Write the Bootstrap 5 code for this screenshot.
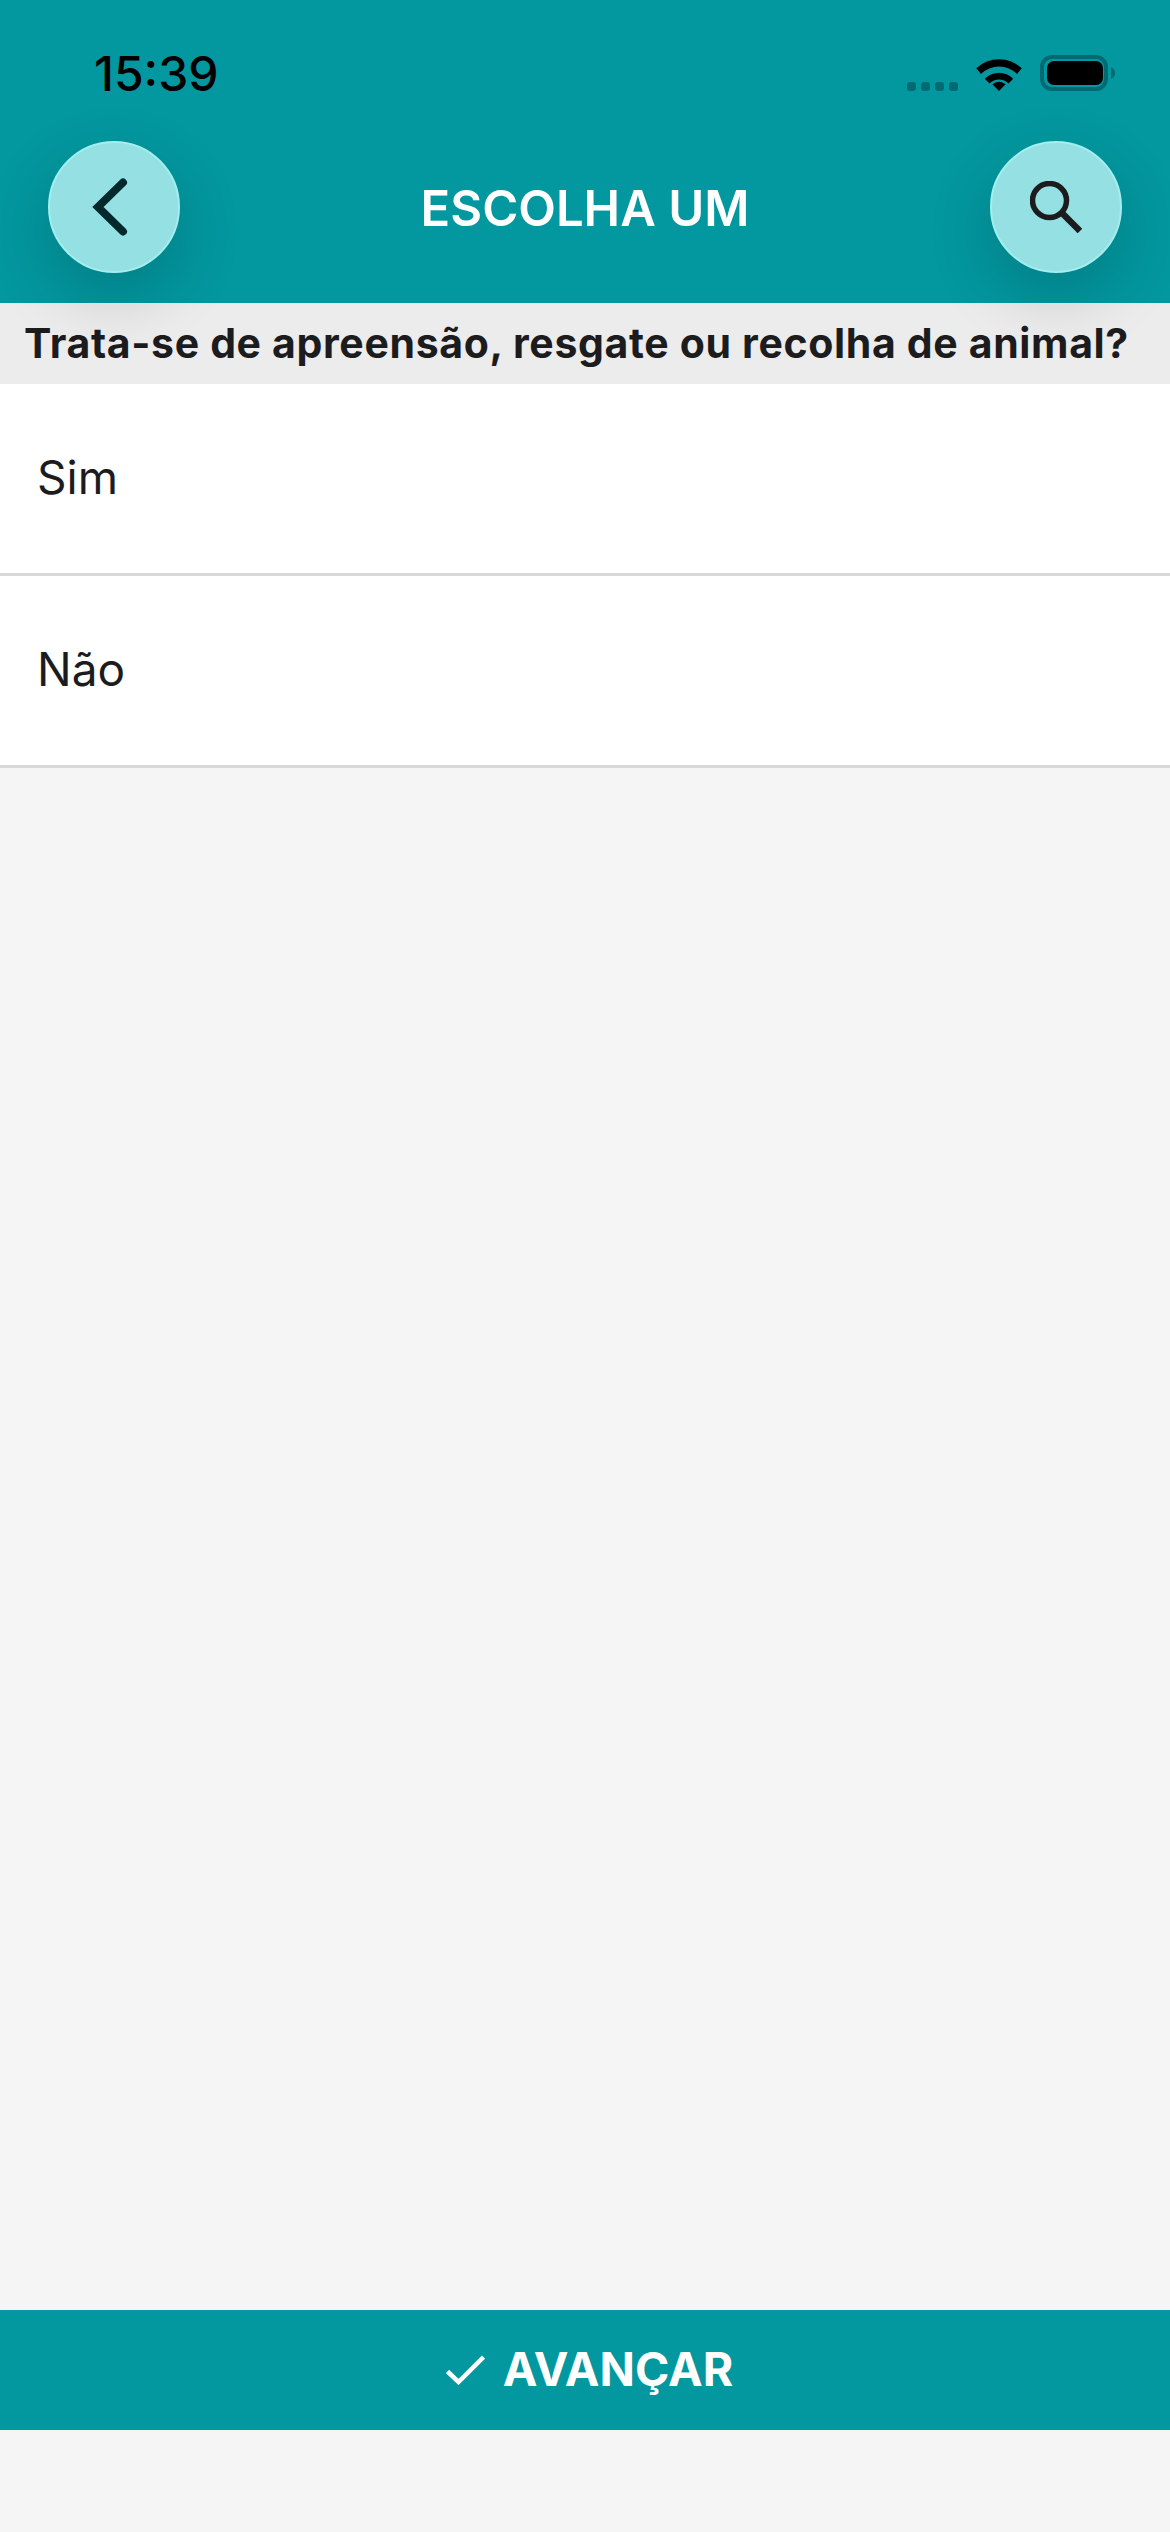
<!DOCTYPE html>
<html lang="pt">
<head>
    <meta charset="UTF-8">
    <meta name="viewport" content="width=device-width, initial-scale=1.0">
    <title>Escolha um</title>
    <link href="https://cdn.jsdelivr.net/npm/bootstrap@5.3.0/dist/css/bootstrap.min.css" rel="stylesheet">
    <style>
        html, body { margin: 0; }
        body { background: #f5f5f5; font-family: Inter, "Liberation Sans", sans-serif; color: #1c1c1e; }
        .app-screen { width: 1170px; height: 2532px; overflow: hidden; }
        .app-head { background: #03979f; height: 303px; position: relative; z-index: 1; }
        .status-row { height: 141px; padding: 49px 55px 0 94px; }
        .status-time { font-size: 48px; font-weight: 500; line-height: 50px; color: #000; }
        .status-icons { gap: 17px; margin-top: 6px; }
        .signal-dots { gap: 5px; margin-top: 27px; }
        .signal-dots span { width: 9px; height: 9px; border-radius: 3px; background: #006a72; }
        .nav-row { padding: 0 48px; }
        .round-btn { width: 132px; height: 132px; padding: 0; background: #95e0e2; border: 2px solid #a3eeee; box-shadow: 0 24px 64px rgba(0, 0, 0, .17); }
        .round-btn:hover, .round-btn:active { background: #95e0e2; }
        .head-title { font-size: 49px; font-weight: 600; color: #fff; line-height: 60px; margin-top: 3px; }
        .ask-band { background: #ececec; height: 81px; padding-left: 24px; font-size: 41px; font-weight: 700; letter-spacing: .65px; white-space: nowrap; }
        .pick-list .list-group-item,
        .pick-list .list-group-item:last-child { height: 192px; padding: 0 0 2px 37px; font-size: 46px; color: #1c1c1e; border-width: 0 0 3px; border-style: solid; border-color: #d8d8d8; background: #fff; }
        .go-btn { height: 120px; margin-bottom: 102px; padding-left: 21px; background: #03979f; border: 0; border-radius: 0; color: #fff; font-size: 46.5px; font-weight: 700; gap: 18px; }
        .go-btn:hover, .go-btn:active { background: #03979f; color: #fff; }
    </style>
</head>
<body>
    <div class="app-screen d-flex flex-column">
        <div class="app-head">
            <div class="status-row d-flex justify-content-between align-items-start">
                <div class="status-time">15:39</div>
                <div class="status-icons d-flex align-items-start">
                    <div class="signal-dots d-flex"><span></span><span></span><span></span><span></span></div>
                    <svg width="48" height="36" viewBox="0 0 50 38">
                        <path d="M1 14 A35 35 0 0 1 49 14 L44 20 A27 27 0 0 0 6 20 Z" fill="#000"/>
                        <path d="M10 25 A21 21 0 0 1 40 25 L35 30 A14 14 0 0 0 15 30 Z" fill="#000"/>
                        <path d="M18 33 A10 10 0 0 1 32 33 L25 40 Z" transform="translate(0 -2)" fill="#000"/>
                    </svg>
                    <svg width="75" height="36" viewBox="0 0 75 36">
                        <rect x="2" y="2" width="64" height="32" rx="10" fill="none" stroke="#006a72" stroke-width="4"/>
                        <rect x="7" y="6" width="56" height="24" rx="7" fill="#000"/>
                        <path d="M71 12 q4 2 4 6 q0 4 -4 6 Z" fill="#006a72"/>
                    </svg>
                </div>
            </div>
            <div class="nav-row d-flex justify-content-between align-items-center">
                <button class="round-btn btn rounded-circle d-flex align-items-center justify-content-center" type="button" aria-label="Voltar">
                    <svg width="44" height="66" viewBox="0 0 44 66">
                        <path d="M31 8.5 L6 33 L31 57.5" fill="none" stroke="#04292c" stroke-width="8" stroke-linecap="round"/>
                    </svg>
                </button>
                <div class="head-title">ESCOLHA UM</div>
                <button class="round-btn btn rounded-circle d-flex align-items-center justify-content-center" type="button" aria-label="Buscar">
                    <svg width="52" height="52" viewBox="0 0 52 52">
                        <circle cx="19.5" cy="19.5" r="17" fill="none" stroke="#1c1c1e" stroke-width="5.5"/>
                        <path d="M32 32 L50 50" fill="none" stroke="#1c1c1e" stroke-width="6.5"/>
                    </svg>
                </button>
            </div>
        </div>
        <div class="ask-band d-flex align-items-center">Trata-se de apreensão, resgate ou recolha de animal?</div>
        <div class="flex-grow-1">
            <div class="pick-list list-group list-group-flush">
                <div class="list-group-item d-flex align-items-center">Sim</div>
                <div class="list-group-item d-flex align-items-center">Não</div>
            </div>
        </div>
        <button class="go-btn btn d-flex align-items-center justify-content-center" type="button">
            <svg width="39" height="30" viewBox="0 0 39 30">
                <path d="M1.5 16.5 L12.5 27 L37.5 2" fill="none" stroke="#fff" stroke-width="4.5"/>
            </svg>
            AVANÇAR
        </button>
    </div>
    <script src="https://cdn.jsdelivr.net/npm/bootstrap@5.3.0/dist/js/bootstrap.bundle.min.js"></script>
</body>
</html>
